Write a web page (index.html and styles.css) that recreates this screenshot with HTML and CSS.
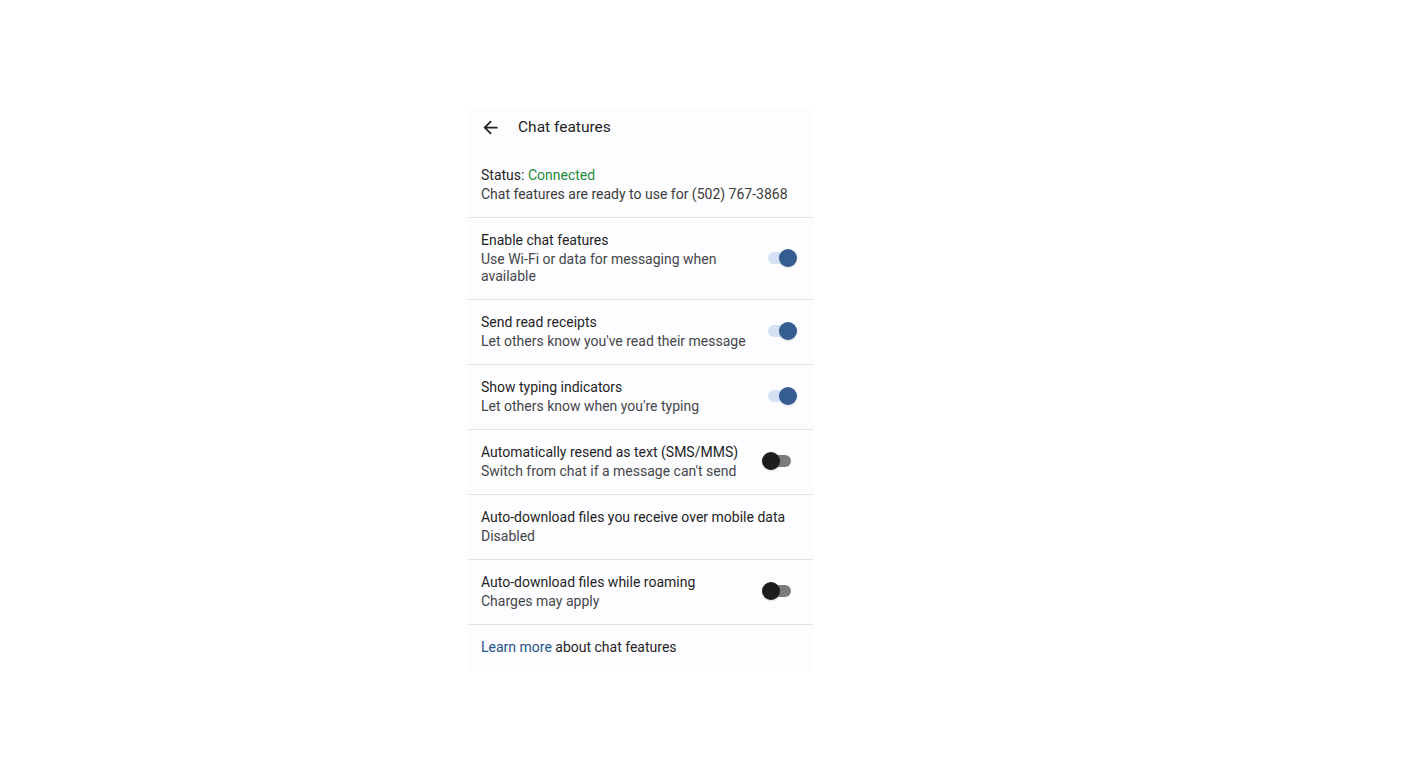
FILE: index.html
```html
<!DOCTYPE html>
<html>
<head>
<meta charset="utf-8">
<link rel="stylesheet" href="styles.css">
</head>
<body>
<div class="page">
  <div class="panel">
    <div class="header">
      <svg class="back" viewBox="0 0 24 24" width="21" height="21"><path d="M20 11H7.83l5.59-5.59L12 4l-8 8 8 8 1.41-1.41L7.83 13H20v-2z" fill="#1f1f1f"/></svg>
      <div class="title">Chat features</div>
    </div>
    <div class="status">
      <div class="line">Status: <span class="green">Connected</span></div>
      <div class="line sub">Chat features are ready to use for (502) 767-3868</div>
    </div>
    <div class="row">
      <div class="text">
        <div class="t">Enable chat features</div>
        <div class="s">Use Wi-Fi or data for messaging when available</div>
      </div>
      <div class="switch on"><span class="track"></span><span class="thumb"></span></div>
    </div>
    <div class="row">
      <div class="text">
        <div class="t">Send read receipts</div>
        <div class="s">Let others know you've read their message</div>
      </div>
      <div class="switch on"><span class="track"></span><span class="thumb"></span></div>
    </div>
    <div class="row">
      <div class="text">
        <div class="t">Show typing indicators</div>
        <div class="s">Let others know when you're typing</div>
      </div>
      <div class="switch on"><span class="track"></span><span class="thumb"></span></div>
    </div>
    <div class="row">
      <div class="text">
        <div class="t">Automatically resend as text (SMS/MMS)</div>
        <div class="s">Switch from chat if a message can't send</div>
      </div>
      <div class="switch off"><span class="track"></span><span class="thumb"></span></div>
    </div>
    <div class="row">
      <div class="text wide">
        <div class="t">Auto-download files you receive over mobile data</div>
        <div class="s">Disabled</div>
      </div>
    </div>
    <div class="row">
      <div class="text">
        <div class="t">Auto-download files while roaming</div>
        <div class="s">Charges may apply</div>
      </div>
      <div class="switch off"><span class="track"></span><span class="thumb"></span></div>
    </div>
    <div class="learn"><span class="link">Learn more</span> about chat features</div>
  </div>
</div>
</body>
</html>
```
FILE: styles.css
```css
html, body {
  margin: 0;
  padding: 0;
  background: #ffffff;
}
body {
  font-family: Roboto, "Noto Sans", sans-serif;
  color: #1f1f1f;
  width: 1415px;
  height: 766px;
  overflow: hidden;
}
.page {
  padding: 108px 0 0 468px;
}
.panel {
  width: 345px;
  background: #fdfdff;
  padding-bottom: 15px;
}
.header {
  height: 38px;
  display: flex;
  align-items: center;
  padding-left: 12px;
}
.back {
  display: block;
  flex: none;
}
.title {
  margin-left: 17px;
  font-size: 15.5px;
  color: #1f1f1f;
}
.status {
  padding: 20px 13px 13px 13px;
  border-bottom: 1px solid #e3e3e6;
  font-size: 14px;
}
.status .line {
  line-height: 19px;
  color: #1f1f1f;
}
.status .sub {
  line-height: 19px;
  color: #3c3c40;
}
.green {
  color: #1e8a3c;
}
.row {
  display: flex;
  align-items: center;
  padding: 12px 16px 14px 13px;
  border-bottom: 1px solid #e3e3e6;
}
.text {
  flex: 1;
  min-width: 0;
  margin-right: 6px;
}
.text.wide {
  margin-right: 0;
}
.t {
  font-size: 14px;
  line-height: 20px;
  color: #1f1f1f;
}
.s {
  font-size: 14px;
  line-height: 17px;
  margin-top: 1px;
  color: #45464a;
}
.switch {
  position: relative;
  flex: none;
  width: 35px;
  height: 18px;
}
.switch .track {
  position: absolute;
  top: 3px;
  width: 28px;
  height: 12px;
  border-radius: 6px;
}
.switch .thumb {
  position: absolute;
  top: 0;
  width: 18px;
  height: 18px;
  border-radius: 50%;
}
.switch.on .track {
  left: 6px;
  background: #d5e1f4;
}
.switch.on .thumb {
  right: 0;
  background: #355d91;
  box-shadow: 0 1px 2px rgba(0,0,0,0.15);
}
.switch.off .track {
  left: 1px;
  background: #7b7c7e;
}
.switch.off .thumb {
  left: 0;
  background: #1d1d1f;
  box-shadow: 0 1px 2px rgba(0,0,0,0.15);
}
.learn {
  padding: 12px 13px 0 13px;
  font-size: 14px;
  line-height: 20px;
  color: #1f1f1f;
}
.link {
  color: #24548a;
}
```
